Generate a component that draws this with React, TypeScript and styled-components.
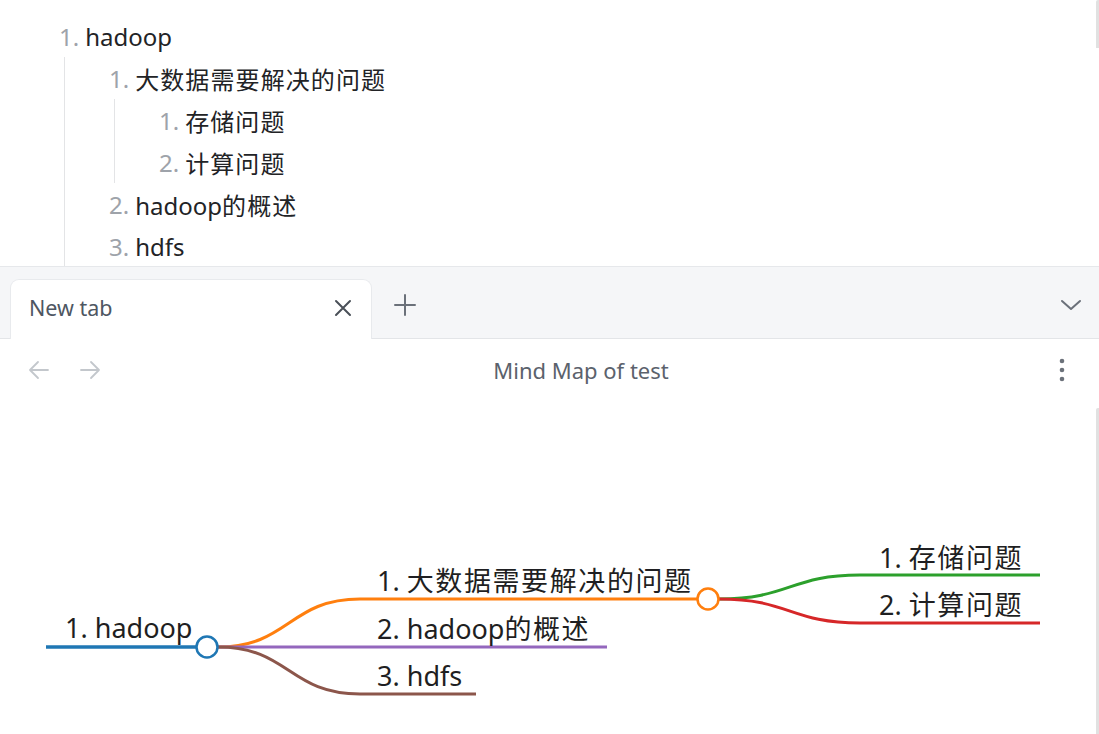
import React from "react";
import styled, { createGlobalStyle } from "styled-components";

const GlobalStyle = createGlobalStyle`
  html, body { margin: 0; padding: 0; background: #ffffff; overflow: hidden; }
  body { font-family: "Noto Sans", "Noto Sans CJK SC", sans-serif; }
`;

const Page = styled.div`
  width: 1099px;
  height: 734px;
  display: flex;
  flex-direction: column;
  overflow: hidden;
`;

const NotesPane = styled.div`
  position: relative;
  height: 266px;
  box-sizing: border-box;
  padding: 15px 0 0 59px;
  overflow: hidden;
  background: #ffffff;
`;

const ScrollThumb = styled.div<{ $top: number; $height: number }>`
  position: absolute;
  right: 0;
  top: ${(p) => p.$top}px;
  width: 3px;
  height: ${(p) => p.$height}px;
  background: #e1e1e1;
  border-radius: 2px 0 0 0;
`;

const List = styled.ol`
  list-style: none;
  margin: 0;
  padding: 0;
`;

const SubList = styled(List)`
  margin-left: 5px;
  border-left: 1px solid #e3e4e6;
  padding-left: 44px;
`;

const Row = styled.div`
  display: flex;
  align-items: center;
  height: 42px;
  font-size: 24px;
  color: #222326;
  white-space: nowrap;
`;

const Num = styled.span`
  color: #9ea3aa;
  margin-right: 6px;
`;

const Cjk = styled.span`
  letter-spacing: 1.1px;
`;

const CjkRun = styled.tspan`
  letter-spacing: 1.6px;
`;

const TabBar = styled.div`
  height: 73px;
  box-sizing: border-box;
  border-top: 1px solid #e6e8eb;
  border-bottom: 1px solid #e3e5e8;
  background: #f5f6f8;
  display: flex;
  align-items: flex-end;
  padding-left: 10px;
  padding-right: 17px;
`;

const Tab = styled.div`
  width: 362px;
  height: 60px;
  margin-bottom: -1px;
  box-sizing: border-box;
  background: #ffffff;
  border: 1px solid #e8eaed;
  border-bottom: none;
  border-radius: 9px 9px 0 0;
  display: flex;
  align-items: center;
  justify-content: space-between;
  padding: 0 18px 4px 18px;
  font-size: 21.5px;
  color: #4e5662;
`;

const IconButton = styled.div<{ $color?: string }>`
  display: flex;
  align-items: center;
  justify-content: center;
  color: ${(p) => p.$color || "#5f6670"};
`;

const NewTabButton = styled(IconButton)`
  align-self: center;
  margin-left: 22px;
  margin-top: 4px;
`;

const Spacer = styled.div`
  flex: 1;
`;

const Chevron = styled(IconButton)`
  align-self: center;
  margin-top: 4px;
`;

const Header = styled.div`
  height: 62px;
  display: flex;
  align-items: center;
  padding: 0 20px 0 27px;
  background: #ffffff;
`;

const Nav = styled.div`
  display: flex;
  gap: 27px;
  width: 110px;
`;

const Title = styled.div`
  flex: 1;
  text-align: center;
  font-size: 22px;
  color: #5b626c;
  padding-right: 22px;
`;

const Menu = styled(IconButton)`
  width: 30px;
  margin-right: 2px;
`;

const MapArea = styled.div`
  position: relative;
  flex: 1;
  background: #ffffff;
  overflow: hidden;
`;

const MapSvg = styled.svg`
  display: block;
  width: 1099px;
  height: 333px;
`;

const MapLabel = styled.text`
  font-family: "Noto Sans", "Noto Sans CJK SC", sans-serif;
  font-size: 27px;
  fill: #1f1f22;
`;

const Close = () => (
  <svg width="20" height="20" viewBox="0 0 20 20">
    <path d="M3 3 L17 17 M17 3 L3 17" stroke="currentColor" strokeWidth="2" strokeLinecap="round" />
  </svg>
);

const Plus = () => (
  <svg width="22" height="22" viewBox="0 0 22 22">
    <path d="M11 1 V21 M1 11 H21" stroke="currentColor" strokeWidth="2" strokeLinecap="round" />
  </svg>
);

const Down = () => (
  <svg width="22" height="14" viewBox="0 0 22 14">
    <path d="M2 3 L11 11 L20 3" stroke="currentColor" strokeWidth="2" fill="none" strokeLinecap="round" strokeLinejoin="round" />
  </svg>
);

const Arrow = ({ dir }: { dir: "left" | "right" }) => (
  <svg width="24" height="24" viewBox="0 0 24 24" style={{ transform: dir === "right" ? "scaleX(-1)" : undefined }}>
    <path d="M21 12 H3 M11 4 L3 12 L11 20" stroke="currentColor" strokeWidth="1.8" fill="none" strokeLinecap="round" strokeLinejoin="round" />
  </svg>
);

const Dots = () => (
  <svg width="6" height="24" viewBox="0 0 6 24">
    <circle cx="3" cy="3" r="2.3" fill="currentColor" />
    <circle cx="3" cy="12" r="2.3" fill="currentColor" />
    <circle cx="3" cy="21" r="2.3" fill="currentColor" />
  </svg>
);

const splitRuns = (s: string) => s.split(/([\u4e00-\u9fff]+)/).filter((r) => r.length > 0);
const isCjk = (s: string) => /[\u4e00-\u9fff]/.test(s);

const MixedText = ({ text }: { text: string }) => (
  <>
    {splitRuns(text).map((r, i) => (isCjk(r) ? <Cjk key={i}>{r}</Cjk> : <span key={i}>{r}</span>))}
  </>
);

const MixedSvgText = ({ text }: { text: string }) => (
  <>
    {splitRuns(text).map((r, i) => (isCjk(r) ? <CjkRun key={i}>{r}</CjkRun> : <tspan key={i}>{r}</tspan>))}
  </>
);

type Node = { text: string; children?: Node[] };

const tree: Node[] = [
  {
    text: "hadoop",
    children: [
      { text: "大数据需要解决的问题", children: [{ text: "存储问题" }, { text: "计算问题" }] },
      { text: "hadoop的概述" },
      { text: "hdfs" },
    ],
  },
];

const Items = ({ nodes }: { nodes: Node[] }) => (
  <>
    {nodes.map((n, i) => (
      <li key={i}>
        <Row>
          <Num>{i + 1}.</Num>
          <span>
            <MixedText text={n.text} />
          </span>
        </Row>
        {n.children && (
          <SubList>
            <Items nodes={n.children} />
          </SubList>
        )}
      </li>
    ))}
  </>
);

const links = [
  { d: "M218,647 C289,647 289,599 360,599 H697", c: "#ff7f0e" },
  { d: "M218,647 H607", c: "#9467bd" },
  { d: "M218,647 C289,647 289,694 360,694 H476", c: "#8c564b" },
  { d: "M719,599 C790,599 790,575 860,575 H1040", c: "#2ca02c" },
  { d: "M719,599 C790,599 790,623 860,623 H1040", c: "#d62728" },
];

const labels = [
  { x: 65, y: 638, t: "1. hadoop" },
  { x: 377, y: 591, t: "1. 大数据需要解决的问题" },
  { x: 377, y: 639, t: "2. hadoop的概述" },
  { x: 377, y: 686, t: "3. hdfs" },
  { x: 879, y: 568, t: "1. 存储问题" },
  { x: 879, y: 615, t: "2. 计算问题" },
];

export default function App() {
  return (
    <Page>
      <GlobalStyle />
      <NotesPane>
        <List>
          <Items nodes={tree} />
        </List>
        <ScrollThumb $top={0} $height={48} />
      </NotesPane>
      <TabBar>
        <Tab>
          <span>New tab</span>
          <IconButton $color="#4a5058">
            <Close />
          </IconButton>
        </Tab>
        <NewTabButton $color="#6b717a">
          <Plus />
        </NewTabButton>
        <Spacer />
        <Chevron $color="#6b717a">
          <Down />
        </Chevron>
      </TabBar>
      <Header>
        <Nav>
          <IconButton $color="#c3c7cc">
            <Arrow dir="left" />
          </IconButton>
          <IconButton $color="#c3c7cc">
            <Arrow dir="right" />
          </IconButton>
        </Nav>
        <Title>Mind Map of test</Title>
        <Menu $color="#6b717a">
          <Dots />
        </Menu>
      </Header>
      <MapArea>
        <MapSvg viewBox="0 401 1099 333">
          <path d="M46,647 H196" stroke="#1f77b4" strokeWidth="3.5" fill="none" />
          {links.map((l, i) => (
            <path key={i} d={l.d} stroke={l.c} strokeWidth="3" fill="none" />
          ))}
          <circle cx="207" cy="647" r="10.5" fill="#fff" stroke="#1f77b4" strokeWidth="2.5" />
          <circle cx="708" cy="599" r="10.5" fill="#fff" stroke="#ff7f0e" strokeWidth="2.5" />
          {labels.map((l, i) => (
            <MapLabel key={i} x={l.x} y={l.y}>
              <MixedSvgText text={l.t} />
            </MapLabel>
          ))}
        </MapSvg>
        <ScrollThumb $top={7} $height={330} />
      </MapArea>
    </Page>
  );
}
